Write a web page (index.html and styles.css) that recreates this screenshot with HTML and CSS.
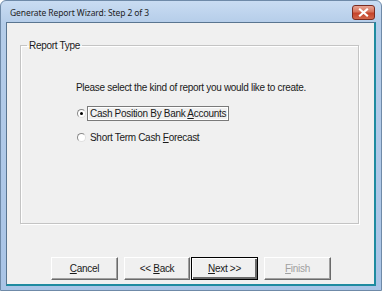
FILE: index.html
```html
<!DOCTYPE html>
<html lang="en">
<head>
  <meta name="viewport" content="width=device-width, initial-scale=1">
  <link rel="stylesheet" href="styles.css">
  <title>Generate Report Wizard</title>
</head>
<body>
  <div class="window">
    <!-- Title bar -->
    <div class="titlebar">
      <span class="title">Generate Report Wizard: Step 2 of 3</span>
      <div class="close_btn">
        <svg width="11" height="9" viewBox="0 0 11 9">
          <path d="M2 1.5 L9 7.5 M9 1.5 L2 7.5" stroke="#fff" stroke-width="2.2" stroke-linecap="square"/>
        </svg>
      </div>
    </div>
    <!-- Client area -->
    <div class="client">
      <fieldset class="group">
        <legend>Report Type</legend>
        <div class="group_body">
          <p class="prompt">Please select the kind of report you would like to create.</p>
          <label class="option">
            <span class="radio checked"></span>
            <span class="option_text focused">Cash Position By Bank <u>A</u>ccounts</span>
          </label>
          <label class="option">
            <span class="radio"></span>
            <span class="option_text">Short Term Cash <u>F</u>orecast</span>
          </label>
        </div>
      </fieldset>
      <div class="buttons">
        <button class="btn"><u>C</u>ancel</button>
        <button class="btn back">&lt;&lt; <u>B</u>ack</button>
        <button class="btn default"><u>N</u>ext &gt;&gt;</button>
        <button class="btn" disabled><u>F</u>inish</button>
      </div>
    </div>
  </div>
</body>
</html>
```

FILE: styles.css
```css
body {
  margin: 0px;
  background-color: #ffffff;
  font-family: "Liberation Sans", Arial, sans-serif;
  font-size: 10px;
  letter-spacing: -0.3px;
  color: #1a1a1a;
}

.window {
  width: 382px;
  height: 291px;
  box-sizing: border-box;
  display: flex;
  flex-direction: column;
  border: 1px solid #6f8aa8;
  border-radius: 6px 6px 0 0;
  background: linear-gradient(to bottom, #c9dcf2 0px, #b5cde9 22px, #a9c4e6 100%);
  padding: 0 5px 4px 5px;
}

.titlebar {
  height: 21px;
  display: flex;
  align-items: center;
  justify-content: space-between;
  padding-left: 4px;
}

.title {
  font-family: "Noto Sans", sans-serif;
  font-size: 8.5px;
  letter-spacing: -0.1px;
  color: #1e1e1e;
  padding-top: 2px;
}

.close_btn {
  width: 21px;
  height: 13px;
  margin-top: 1px;
  margin-right: 1px;
  border: 1px solid #7a2b20;
  border-radius: 3px;
  background: linear-gradient(to bottom, #e8a493 0%, #d7735c 45%, #c4432a 55%, #d2664a 100%);
  display: flex;
  align-items: center;
  justify-content: center;
}

.client {
  flex: 1;
  display: flex;
  flex-direction: column;
  background-color: #f0f0f0;
  border: 1px solid #5a7590;
  border-bottom: 2px solid #1e8ba0;
  border-right: 2px solid #1e8ba0;
  padding: 17px 15px 0 13px;
}

.group {
  margin: 0;
  height: 184px;
  box-sizing: border-box;
  border: 1px solid #c4c4c4;
  box-shadow: inset 1px 1px 0 #ffffff, 1px 1px 0 #ffffff;
  padding: 0;
}

.group legend {
  padding: 0 2px;
  margin-left: 6px;
}

.group_body {
  padding-left: 55px;
}

.prompt {
  margin: 31px 0 12px 0;
}

.option {
  display: flex;
  align-items: center;
  height: 16px;
  margin-bottom: 8px;
}

.radio {
  width: 7px;
  height: 7px;
  border-radius: 50%;
  border: 1px solid #8a8a8a;
  border-right-color: #e0e0e0;
  border-bottom-color: #e0e0e0;
  background: #ffffff;
  margin: 0 1px 0 1px;
  display: flex;
  align-items: center;
  justify-content: center;
  box-sizing: content-box;
}

.radio.checked::after {
  content: "";
  width: 3px;
  height: 3px;
  border-radius: 50%;
  background: #000000;
}

.option_text {
  padding: 1px 2px;
  border: 1px solid transparent;
}

.option_text.focused {
  border: 1px solid #7a7a7a;
  box-shadow: inset 0 0 0 1px #ffffff;
}

.buttons {
  display: flex;
  gap: 6px;
  padding-left: 31px;
  margin-top: 33px;
}

.btn {
  width: 67px;
  height: 23px;
  box-sizing: border-box;
  font-family: "Liberation Sans", Arial, sans-serif;
  font-size: 10px;
  letter-spacing: -0.3px;
  background: #f0f0f0;
  color: #1a1a1a;
  border: 1px solid;
  border-color: #ffffff #6a6a6a #6a6a6a #ffffff;
  box-shadow: inset -1px -1px 0 #a0a0a0;
  padding: 0;
}

.btn.back {
  width: 66px;
}

.btn.default {
  margin-left: -5px;
  border: 1px solid #000000;
  box-shadow: inset 1px 1px 0 #ffffff, inset -2px -2px 0 #6a6a6a;
}

.btn:disabled {
  color: #a0a0a0;
}
```
